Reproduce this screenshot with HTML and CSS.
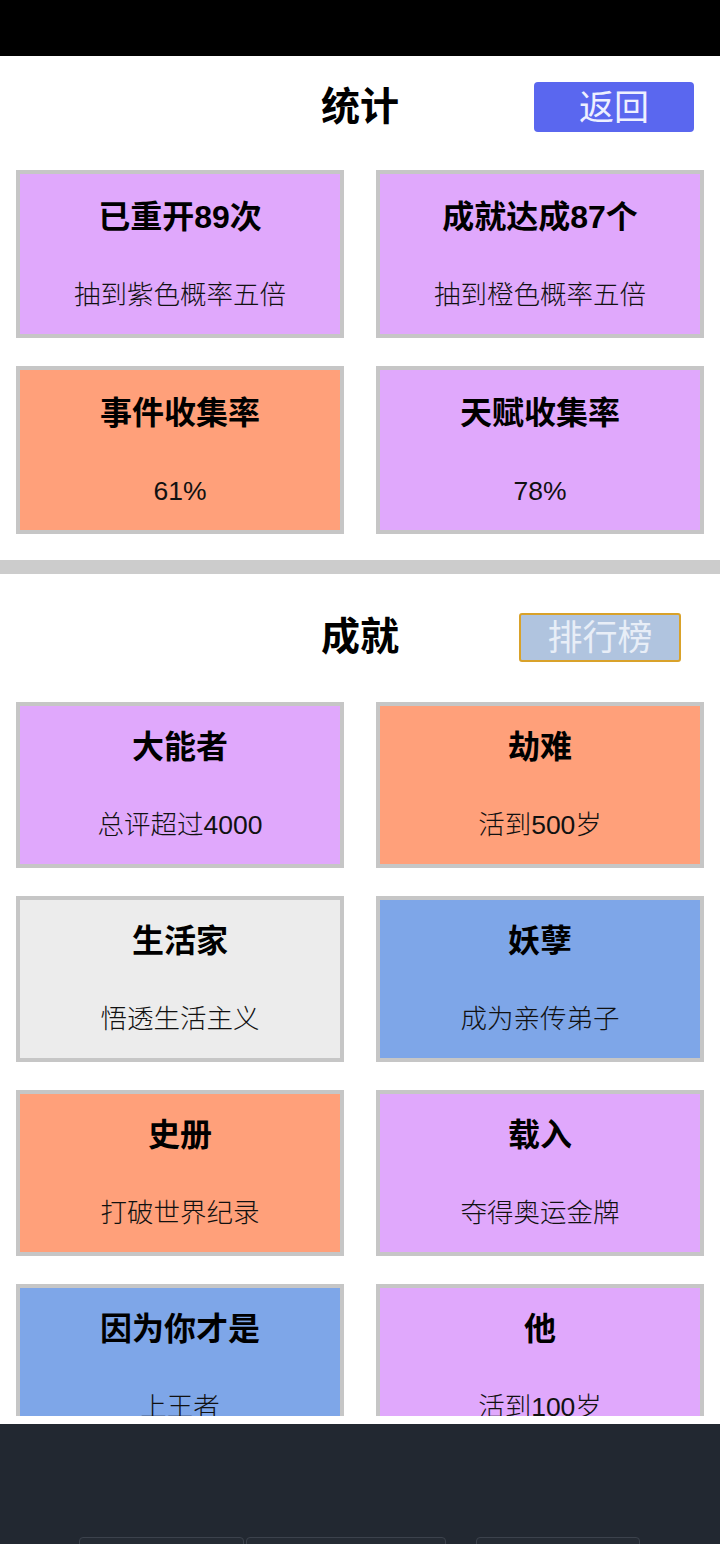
FILE: index.html
```html
<!DOCTYPE html>
<html lang="zh-CN">
<head>
<meta charset="utf-8">
<title>统计</title>
<link rel="stylesheet" href="styles.css">
</head>
<body>
<div class="page">
  <div class="status-bar"></div>
  <main class="content">
    <section class="stats">
      <div class="head head-stats">
        <h1 class="title">统计</h1>
        <button class="btn btn-back">返回</button>
      </div>
      <div class="grid">
        <div class="card purple"><div class="card-title">已重开89次</div><div class="card-sub">抽到紫色概率五倍</div></div>
        <div class="card purple"><div class="card-title">成就达成87个</div><div class="card-sub">抽到橙色概率五倍</div></div>
        <div class="card orange"><div class="card-title">事件收集率</div><div class="card-sub">61%</div></div>
        <div class="card purple"><div class="card-title">天赋收集率</div><div class="card-sub">78%</div></div>
      </div>
    </section>
    <div class="divider"></div>
    <section class="achievements">
      <div class="head head-ach">
        <h1 class="title">成就</h1>
        <button class="btn btn-rank">排行榜</button>
      </div>
      <div class="list">
        <div class="grid grid-ach">
          <div class="card purple"><div class="card-title">大能者</div><div class="card-sub">总评超过4000</div></div>
          <div class="card orange"><div class="card-title">劫难</div><div class="card-sub">活到500岁</div></div>
          <div class="card grey"><div class="card-title">生活家</div><div class="card-sub">悟透生活主义</div></div>
          <div class="card blue"><div class="card-title">妖孽</div><div class="card-sub">成为亲传弟子</div></div>
          <div class="card orange"><div class="card-title">史册</div><div class="card-sub">打破世界纪录</div></div>
          <div class="card purple"><div class="card-title">载入</div><div class="card-sub">夺得奥运金牌</div></div>
          <div class="card blue"><div class="card-title">因为你才是</div><div class="card-sub">上王者</div></div>
          <div class="card purple"><div class="card-title">他</div><div class="card-sub">活到100岁</div></div>
        </div>
      </div>
    </section>
  </main>
  <footer class="footer">
    <div class="footer-btns">
      <div class="fbtn fbtn-a"></div>
      <div class="fbtn fbtn-b"></div>
      <div class="fbtn fbtn-c"></div>
    </div>
  </footer>
</div>
</body>
</html>
```
FILE: styles.css
```css
* { box-sizing: border-box; }
html, body { margin: 0; padding: 0; background: #ffffff; }
body {
  font-family: "Liberation Sans", "Noto Sans CJK SC", sans-serif;
  color: #000;
}
.page {
  width: 720px;
  height: 1544px;
  overflow: hidden;
  display: flex;
  flex-direction: column;
}
.status-bar { height: 56px; background: #000; flex: none; }
.content { flex: none; height: 1368px; display: flex; flex-direction: column; }

.head {
  display: grid;
  grid-template-columns: 1fr auto 1fr;
  align-items: center;
}
.head-stats { margin-top: 26px; margin-bottom: 38px; height: 50px; }
.head-ach { margin-top: 38px; margin-bottom: 40px; height: 50px; }
.title {
  grid-column: 2;
  margin: 0;
  font-size: 39px;
  font-weight: 700;
  line-height: 50px;
}
.btn {
  grid-column: 3;
  justify-self: end;
  font-family: "Liberation Sans", "Noto Sans CJK SC", sans-serif;
  font-size: 35px;
  line-height: 1;
  padding: 0;
  cursor: pointer;
}
.btn-back {
  width: 160px;
  height: 50px;
  margin-right: 26px;
  background: #5a67ef;
  color: #eef0ff;
  border: none;
  border-radius: 4px;
}
.btn-rank {
  width: 162px;
  height: 49px;
  margin-right: 39px;
  background: #b0c4df;
  color: #e8eef7;
  border: 2px solid #d9a22a;
  border-radius: 3px;
}

.grid {
  display: grid;
  grid-template-columns: 328px 328px;
  column-gap: 32px;
  row-gap: 28px;
  padding: 0 16px;
}
.card {
  height: 168px;
  border: 4px solid #c6c6c6;
  display: flex;
  flex-direction: column;
  align-items: center;
  text-align: center;
}
.card-title {
  margin-top: 23px;
  font-size: 32px;
  font-weight: 700;
  line-height: 40px;
}
.card-sub {
  margin-top: 40px;
  font-size: 26.5px;
  font-weight: 300;
  line-height: 36px;
  color: #111;
}
.grid-ach .card { height: 166px; }
.grid-ach .card-title { margin-top: 21px; }

.purple { background: #e0a8fc; }
.orange { background: #ffa07a; }
.blue { background: #7ea6e8; }
.grey { background: #ececec; }

.divider { height: 14px; background: #cccccc; margin-top: 26px; flex: none; }

.achievements { display: flex; flex-direction: column; }
.list { height: 714px; overflow: hidden; }

.footer {
  flex: none;
  height: 120px;
  background: #222831;
  overflow: hidden;
}
.footer-btns {
  display: flex;
  margin-top: 113px;
  margin-left: 79px;
}
.fbtn {
  height: 40px;
  border: 1px solid #3c424c;
  border-radius: 4px;
  background: #252b34;
}
.fbtn-a { width: 165px; }
.fbtn-b { width: 200px; margin-left: 2px; }
.fbtn-c { width: 164px; margin-left: 30px; }
```
